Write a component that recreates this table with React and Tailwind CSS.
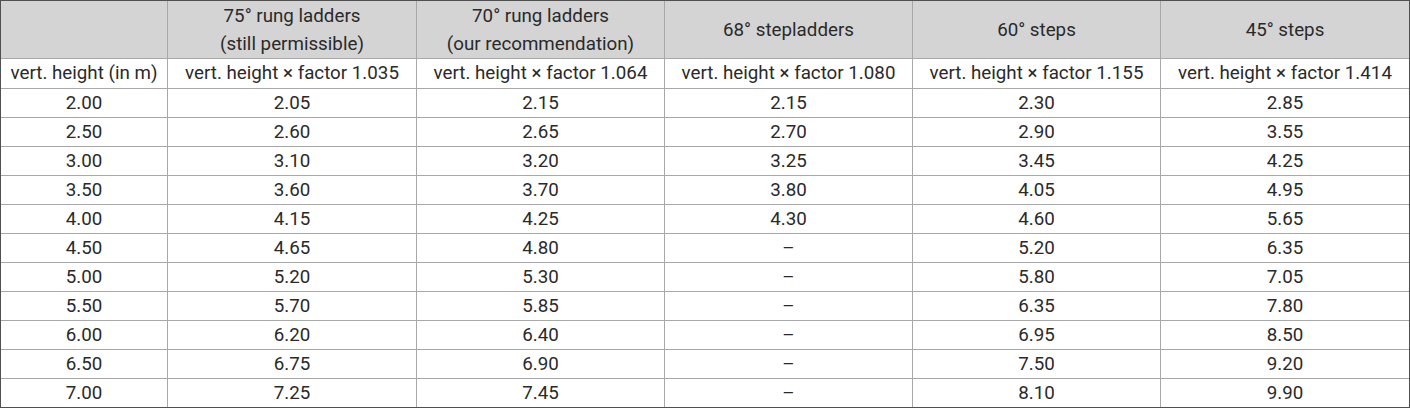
import React from "react";

const columns = [
  ["75° rung ladders", "(still permissible)"],
  ["70° rung ladders", "(our recommendation)"],
  ["68° stepladders"],
  ["60° steps"],
  ["45° steps"],
];

const factors = ["1.035", "1.064", "1.080", "1.155", "1.414"];

const rows = [
  ["2.00", "2.05", "2.15", "2.15", "2.30", "2.85"],
  ["2.50", "2.60", "2.65", "2.70", "2.90", "3.55"],
  ["3.00", "3.10", "3.20", "3.25", "3.45", "4.25"],
  ["3.50", "3.60", "3.70", "3.80", "4.05", "4.95"],
  ["4.00", "4.15", "4.25", "4.30", "4.60", "5.65"],
  ["4.50", "4.65", "4.80", "–", "5.20", "6.35"],
  ["5.00", "5.20", "5.30", "–", "5.80", "7.05"],
  ["5.50", "5.70", "5.85", "–", "6.35", "7.80"],
  ["6.00", "6.20", "6.40", "–", "6.95", "8.50"],
  ["6.50", "6.75", "6.90", "–", "7.50", "9.20"],
  ["7.00", "7.25", "7.45", "–", "8.10", "9.90"],
];

const Cell = ({ children, head }) => (
  <div
    className={`flex flex-col items-center justify-center text-center whitespace-nowrap ${
      head ? "bg-[#d4d4d4] leading-[28px]" : "bg-white leading-none"
    }`}
  >
    {children}
  </div>
);

const App = () => {
  return (
    <div className="w-[1410px] h-[408px] bg-white">
      <div
        className="grid grid-cols-[166px_248px_247px_247px_247px_248px] grid-rows-[57px_29px_repeat(11,28px)] gap-px bg-[#a8a8a8] border border-[#505050] text-[18.75px] text-[#2a2a2a]"
        style={{ fontFamily: "Roboto, 'Liberation Sans', sans-serif" }}
      >
        <Cell head />
        {columns.map((lines) => (
          <Cell head key={lines[0]}>
            {lines.map((l) => (
              <span key={l}>{l}</span>
            ))}
          </Cell>
        ))}
        <Cell>vert. height (in m)</Cell>
        {factors.map((f) => (
          <Cell key={f}>vert. height × factor {f}</Cell>
        ))}
        {rows.map((row, i) =>
          row.map((v, j) => <Cell key={i + "-" + j}>{v}</Cell>)
        )}
      </div>
    </div>
  );
};

export default App;
